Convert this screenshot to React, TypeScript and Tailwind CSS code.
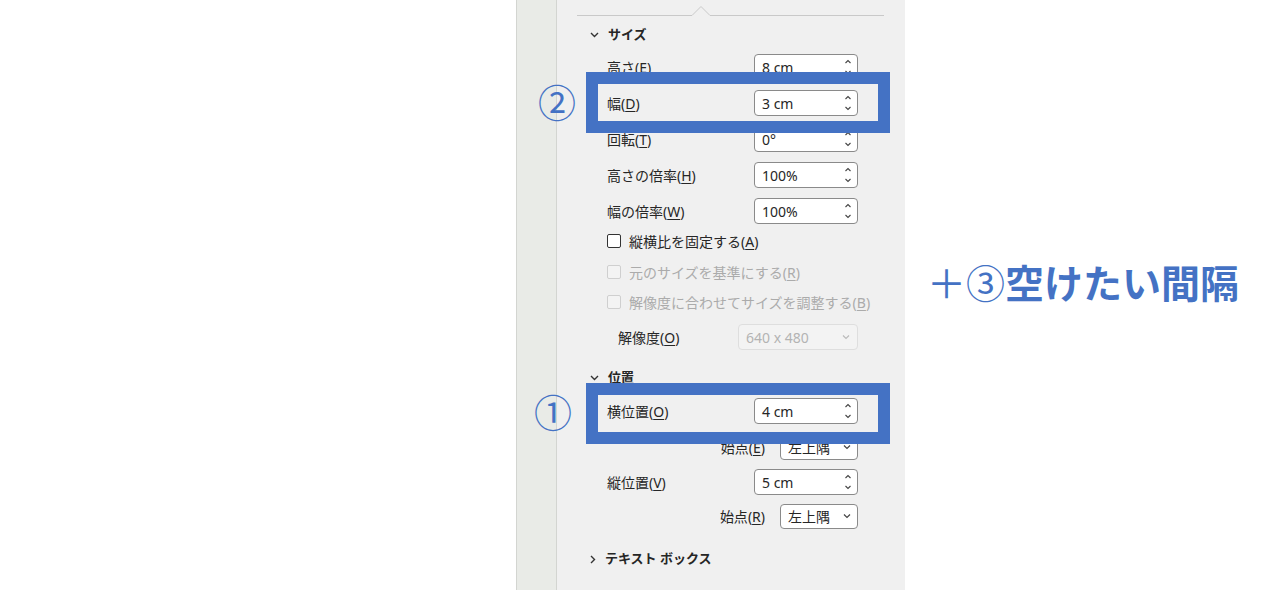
import React from "react";

const font = "font-['Noto_Sans','Noto_Sans_CJK_JP',sans-serif]";

function Key({ text, k }: { text: string; k: string }) {
  return (
    <span>
      {text}(<span className="underline underline-offset-2">{k}</span>)
    </span>
  );
}

function Stepper() {
  return (
    <svg width="8" height="20" viewBox="0 0 8 20" className="shrink-0">
      <path d="M1.5 6 L4 3.5 L6.5 6" fill="none" stroke="#444" strokeWidth="1.1" />
      <path d="M1.5 14 L4 16.5 L6.5 14" fill="none" stroke="#444" strokeWidth="1.1" />
    </svg>
  );
}

function Caret({ color = "#444" }: { color?: string }) {
  return (
    <svg width="8" height="6" viewBox="0 0 8 6" className="shrink-0">
      <path d="M1 1.5 L4 4.5 L7 1.5" fill="none" stroke={color} strokeWidth="1.2" />
    </svg>
  );
}

function SpinRow({ text, k, value, h }: { text: string; k: string; value: string; h: string }) {
  return (
    <div className={`flex items-center justify-between pl-[50px] pr-[47px] ${h}`}>
      <Key text={text} k={k} />
      <div className="flex h-[26px] w-[104px] items-center justify-between rounded-[4px] border border-[#8a8a8a] bg-white pl-[7px] pr-[5px]">
        <span>{value}</span>
        <Stepper />
      </div>
    </div>
  );
}

function OriginRow({ k, h }: { k: string; h: string }) {
  return (
    <div className={`flex items-center justify-end gap-[15px] pr-[47px] ${h}`}>
      <Key text="始点" k={k} />
      <div className="flex h-[25px] w-[78px] items-center justify-between rounded-[4px] border border-[#8a8a8a] bg-white pl-[7px] pr-[6px]">
        <span>左上隅</span>
        <Caret />
      </div>
    </div>
  );
}

function CheckRow({ text, k, disabled, h }: { text: string; k: string; disabled?: boolean; h: string }) {
  return (
    <div className={`flex items-center gap-[8px] pl-[50px] ${h} ${disabled ? "text-[#ababab]" : ""}`}>
      <span
        className={`h-[14px] w-[14px] rounded-[2px] border ${
          disabled ? "border-[#cfcfcf] bg-[#f3f3f3]" : "border-[#333] bg-white"
        }`}
      />
      <Key text={text} k={k} />
    </div>
  );
}

function Section({ title, open, h }: { title: string; open: boolean; h: string }) {
  return (
    <div className={`flex items-center gap-[9px] pl-[33px] text-[13px] font-bold ${h}`}>
      {open ? (
        <svg width="9" height="6" viewBox="0 0 9 6">
          <path d="M1 1 L4.5 4.5 L8 1" fill="none" stroke="#333" strokeWidth="1.4" />
        </svg>
      ) : (
        <svg width="6" height="9" viewBox="0 0 6 9">
          <path d="M1 1 L4.5 4.5 L1 8" fill="none" stroke="#333" strokeWidth="1.4" />
        </svg>
      )}
      <span>{title}</span>
    </div>
  );
}

function Highlight({ className }: { className: string }) {
  return (
    <div
      className={`pointer-events-none absolute h-[61px] w-[304px] border-[12px] border-[#4472c4] ${className}`}
    />
  );
}

export default function App() {
  return (
    <div className={`relative flex h-[590px] w-[1280px] overflow-hidden bg-white text-[14px] text-[#262626] ${font}`}>
      <div className="w-[516px] shrink-0" />

      <div className="flex h-full w-[389px] shrink-0">
        <div className="w-[41px] border-l border-r border-[#d3d5d1] bg-[#e9ebe7]" />
        <div className="flex flex-1 flex-col bg-[#f0f0f0]">
          <div className="px-[20px] pt-[2px]">
            <svg width="307" height="14" viewBox="0 0 307 14" className="block">
              <path d="M0 13.5 H115 L124 4.5 L133 13.5 H307" fill="none" stroke="#c9c9c9" strokeWidth="1" />
            </svg>
          </div>

          <Section title="サイズ" open h="h-[24px] mt-[7px]" />
          <SpinRow text="高さ" k="E" value="8 cm" h="h-[36px] mt-[2px]" />
          <SpinRow text="幅" k="D" value="3 cm" h="h-[36px]" />
          <SpinRow text="回転" k="T" value="0°" h="h-[36px]" />
          <SpinRow text="高さの倍率" k="H" value="100%" h="h-[36px]" />
          <SpinRow text="幅の倍率" k="W" value="100%" h="h-[36px]" />
          <CheckRow text="縦横比を固定する" k="A" h="h-[24px]" />
          <CheckRow text="元のサイズを基準にする" k="R" disabled h="h-[30px] mt-[4px]" />
          <CheckRow text="解像度に合わせてサイズを調整する" k="B" disabled h="h-[30px]" />
          <div className="flex h-[40px] items-center justify-between pl-[61px] pr-[47px]">
            <Key text="解像度" k="O" />
            <div className="flex h-[26px] w-[120px] items-center justify-between rounded-[4px] border border-[#dedede] bg-[#f3f3f3] pl-[7px] pr-[7px] text-[#b3b3b3]">
              <span>640 x 480</span>
              <Caret color="#bbb" />
            </div>
          </div>

          <Section title="位置" open h="h-[24px] mt-[9px]" />
          <SpinRow text="横位置" k="O" value="4 cm" h="h-[36px] mt-[3px]" />
          <OriginRow k="E" h="h-[36px]" />
          <SpinRow text="縦位置" k="V" value="5 cm" h="h-[34px]" />
          <OriginRow k="R" h="h-[34px]" />

          <Section title="テキスト ボックス" open={false} h="h-[24px] mt-[14px]" />
        </div>
      </div>

      <div className="flex-1 pl-[22px] pt-[253px]">
        <div className="font-['Noto_Sans_CJK_JP',sans-serif] text-[39px] font-bold leading-[56px] text-[#4472c4]">
          <span className="font-normal">＋③</span>空けたい間隔
        </div>
      </div>

      <Highlight className="left-[586px] top-[72px]" />
      <Highlight className="left-[586px] top-[383px]" />

      <div className="absolute left-[538px] top-[75px] font-['Noto_Sans_CJK_JP',sans-serif] text-[38px] leading-[52px] text-[#4472c4]">
        ②
      </div>
      <div className="absolute left-[534px] top-[385px] font-['Noto_Sans_CJK_JP',sans-serif] text-[38px] leading-[52px] text-[#4472c4]">
        ①
      </div>
    </div>
  );
}
